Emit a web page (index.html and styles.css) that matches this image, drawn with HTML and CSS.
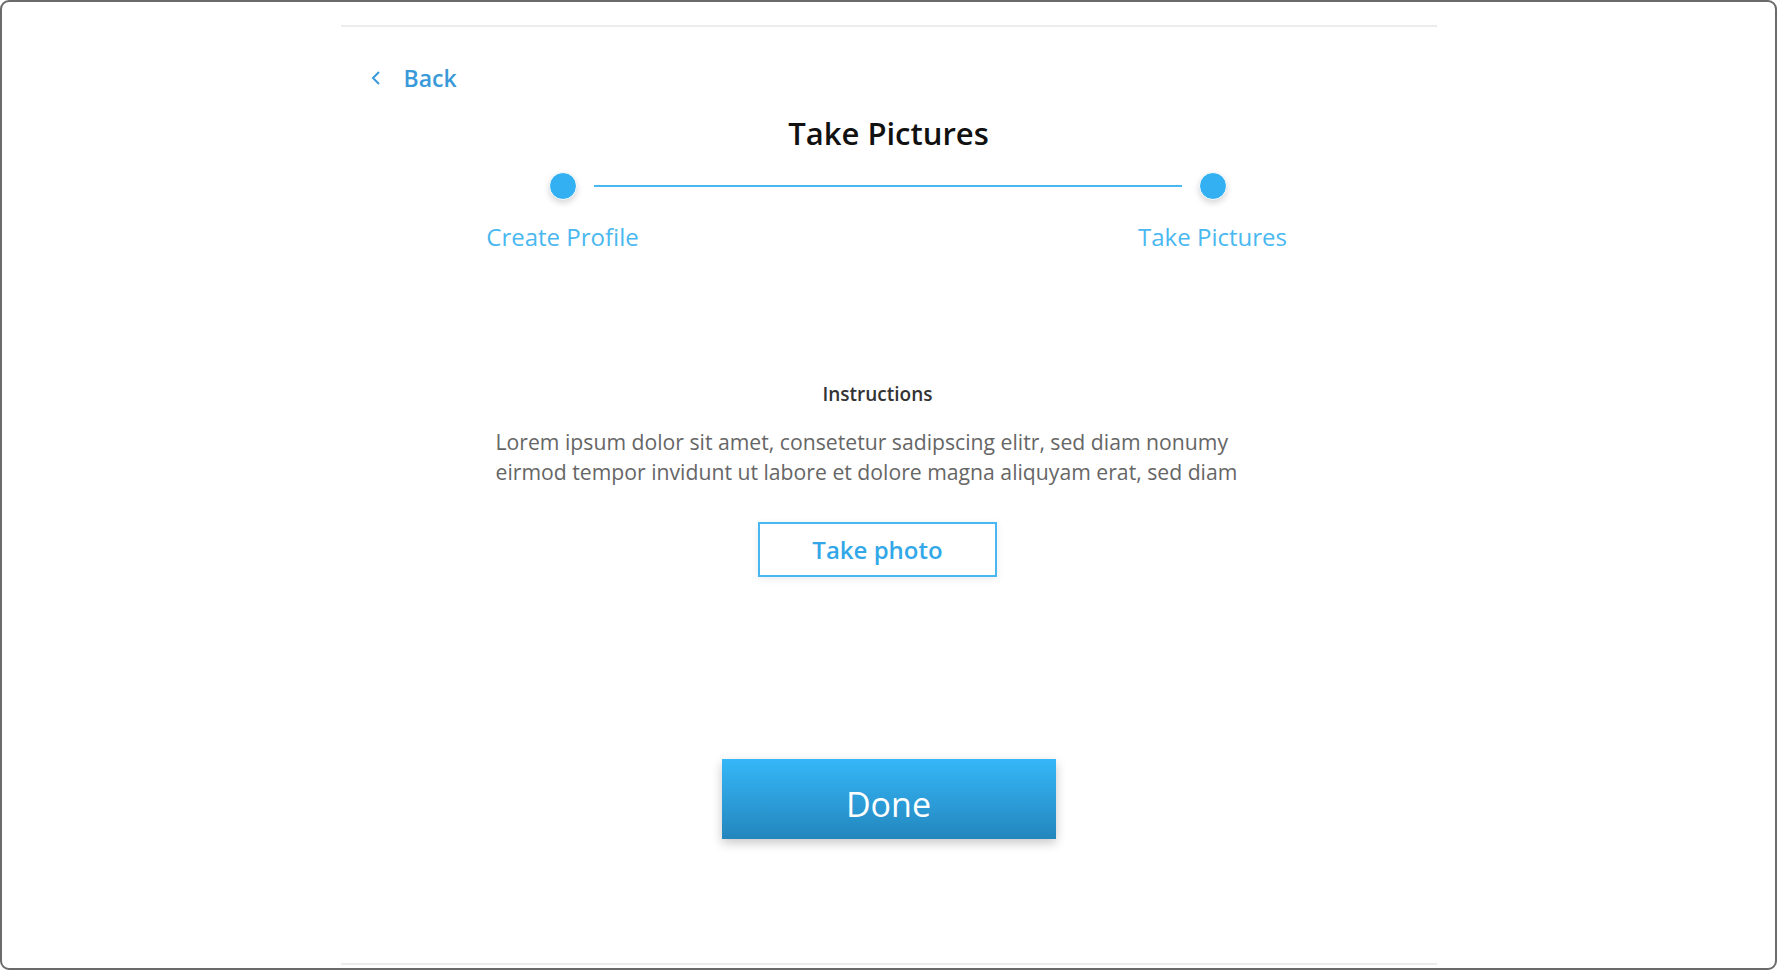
FILE: index.html
```html
<!DOCTYPE html>
<html>
<head>
<meta charset="utf-8">
<link rel="stylesheet" href="styles.css">
</head>
<body>
<div class="frame">
  <main class="page">
    <a class="back" href="#">
      <svg class="chev" width="12" height="16" viewBox="0 0 12 16"><polyline points="9,2 3,8 9,14" fill="none" stroke="#3a9ad9" stroke-width="2"/></svg>
      <span>Back</span>
    </a>
    <h1 class="title">Take Pictures</h1>
    <div class="stepper">
      <div class="step">
        <span class="dot"></span>
        <span class="label">Create Profile</span>
      </div>
      <div class="track"></div>
      <div class="step">
        <span class="dot"></span>
        <span class="label">Take Pictures</span>
      </div>
    </div>
    <section class="instructions">
      <h2 class="inst-title">Instructions</h2>
      <p class="inst-text">Lorem ipsum dolor sit amet, consetetur sadipscing elitr, sed diam nonumy<br>eirmod tempor invidunt ut labore et dolore magna aliquyam erat, sed diam</p>
      <button class="photo-btn">Take photo</button>
    </section>
    <div class="actions">
      <button class="done-btn">Done</button>
    </div>
  </main>
</div>
</body>
</html>
```

FILE: styles.css
```css
* { box-sizing: border-box; }
html, body { margin: 0; padding: 0; background: #fff; }
body { font-family: "Open Sans", "Noto Sans", sans-serif; }

.frame {
  width: 1777px;
  height: 970px;
  border: 2px solid #6b6b6b;
  border-radius: 9px;
  background: #fff;
  padding-top: 23px;
}

.page {
  width: 1096px;
  height: 940px;
  margin: 0 auto;
  border-top: 2px solid #ececec;
  border-bottom: 2px solid #ececec;
  display: flex;
  flex-direction: column;
}

.back {
  display: flex;
  align-items: center;
  gap: 22px;
  margin: 36px 0 0 29px;
  color: #3a9ad9;
  text-decoration: none;
  font-size: 23px;
  font-weight: 600;
  height: 30px;
  align-self: flex-start;
}
.chev { display: block; }

.title {
  margin: 18px 0 0;
  text-align: center;
  font-size: 31px;
  font-weight: 600;
  color: #111;
  line-height: 44px;
}

.stepper {
  display: flex;
  align-items: flex-start;
  width: 678px;
  margin: 17px 0 0 208px;
}
.step {
  width: 28px;
  display: flex;
  flex-direction: column;
  align-items: center;
  flex: none;
}
.dot {
  width: 28px;
  height: 28px;
  border-radius: 50%;
  background: #33b0f2;
  border: 1px solid #fff;
  box-shadow: 0 3px 6px rgba(0,0,0,0.16);
  flex: none;
}
.label {
  margin-top: 21px;
  font-size: 24px;
  line-height: 32px;
  color: #4ab8f0;
  white-space: nowrap;
}
.track {
  flex: 1;
  height: 2px;
  background: #4ab8f0;
  margin: 13px 17px 0;
}

.instructions {
  width: 764px;
  margin: 128px 0 0 155px;
  display: flex;
  flex-direction: column;
  align-items: center;
}
.inst-title {
  margin: 0;
  font-size: 19px;
  font-weight: 600;
  color: #333;
  line-height: 26px;
}
.inst-text {
  align-self: flex-start;
  margin: 20px 0 0;
  font-size: 21.2px;
  line-height: 29.5px;
  color: #666;
  white-space: nowrap;
}
.photo-btn {
  margin-top: 36px;
  width: 239px;
  height: 55px;
  background: #fff;
  border: 2px solid #4ab8f0;
  color: #33a8e8;
  font-family: inherit;
  font-size: 24px;
  font-weight: 600;
  box-shadow: 0 2px 8px rgba(0,0,0,0.08);
  padding: 0;
}

.actions {
  display: flex;
  justify-content: center;
  margin-top: 182px;
}
.done-btn {
  width: 334px;
  height: 80px;
  border: none;
  background: linear-gradient(#35b7f8, #2386bd);
  color: #fff;
  font-family: inherit;
  font-size: 34px;
  box-shadow: 0 4px 10px rgba(0,0,0,0.22);
  padding: 9px 0 0;
}
```
